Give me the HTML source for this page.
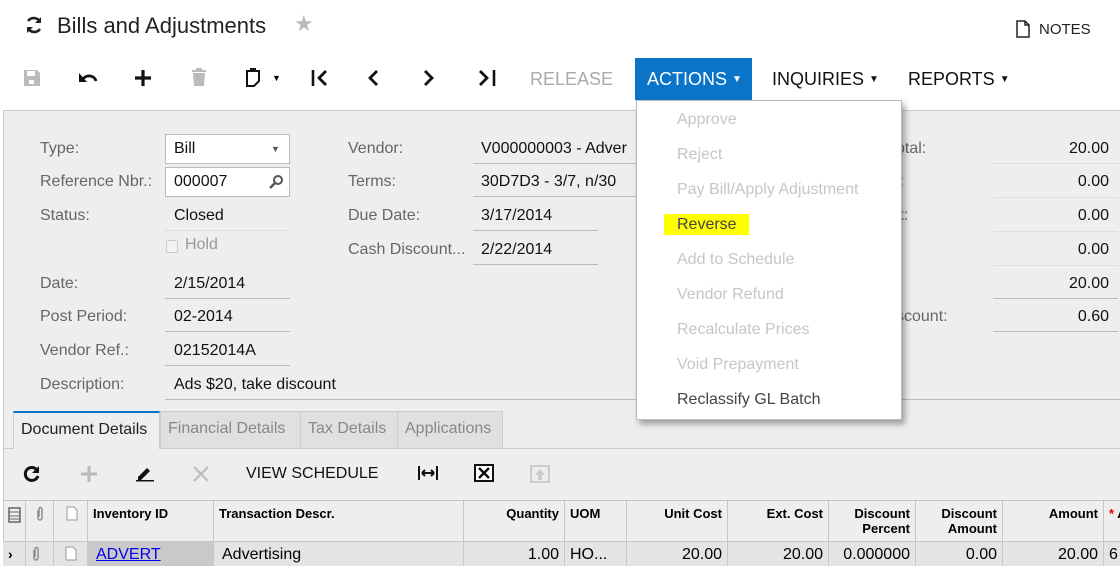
<!DOCTYPE html>
<html><head><meta charset="utf-8"><style>
*{margin:0;padding:0;box-sizing:border-box}
body{width:1120px;height:566px;overflow:hidden;background:#fff;font-family:"Liberation Sans",Arial,sans-serif;position:relative;color:#000}
.a{position:absolute;white-space:nowrap}
.lbl{font-size:16px;color:#666;margin-top:1px}
.val{font-size:16px;color:#111;margin-top:1px}
.ln{position:absolute;height:1px;background:#bbb}
.tb{font-size:18px;color:#111}
.dm{color:#aaa}
.mi{position:absolute;left:677px;font-size:16px;color:#c6c6c6;margin-top:1px}
.gh{position:absolute;top:500px;height:41px;border-right:1px solid #c6c6c6;border-top:1px solid #c6c6c6;font-size:13px;font-weight:bold;padding:5px 5px;line-height:15px}
.gr{position:absolute;top:541px;height:25px;border-right:1px solid #c6c6c6;border-top:1px solid #c6c6c6;font-size:16px;padding:4px 5px;background:#e4e4e4}
.r{text-align:right}
</style></head><body>
<svg class="a" style="left:24px;top:15px" width="20" height="20" viewBox="0 0 20 20"><path d="M16 7A7 7 0 0 0 4 6M4 13a7 7 0 0 0 12 1" fill="none" stroke="#222" stroke-width="2.6"/><path d="M17 2v6h-6z M3 18v-6h6z" fill="#222"/></svg>
<div class="a" style="left:57px;top:13px;font-size:22px;color:#222">Bills and Adjustments</div>
<div class="a" style="left:294px;top:11px;font-size:22px;color:#bbb">★</div>
<svg class="a" style="left:1016px;top:20px" width="14" height="18" viewBox="0 0 14 18"><path d="M1 1h8l4 4v12H1z M9 1v4h4" fill="none" stroke="#222" stroke-width="1.5"/></svg>
<div class="a" style="left:1039px;top:21px;font-size:15px;color:#222">NOTES</div>
<svg class="a" style="left:23px;top:69px" width="18" height="18" viewBox="0 0 18 18"><path d="M1 1h13l3 3v13H1z" fill="#bbb"/><rect x="4" y="2" width="8" height="5" fill="#fff"/><rect x="6" y="11" width="5" height="4" fill="#fff"/></svg>
<svg class="a" style="left:78px;top:70px" width="20" height="16" viewBox="0 0 20 16"><path d="M5 9a7 6 0 0 1 13 2" fill="none" stroke="#111" stroke-width="2.8"/><path d="M1 3v9h8z" fill="#111"/></svg>
<svg class="a" style="left:134px;top:69px" width="18" height="18" viewBox="0 0 18 18"><path d="M9 1v16M1 9h16" stroke="#111" stroke-width="3.2"/></svg>
<svg class="a" style="left:190px;top:67px" width="18" height="20" viewBox="0 0 18 20"><rect x="2" y="3" width="14" height="2" fill="#bbb"/><rect x="6" y="1" width="6" height="2" fill="#bbb"/><path d="M3 6h12l-1 13H4z" fill="#bbb"/></svg>
<svg class="a" style="left:245px;top:67px" width="18" height="21" viewBox="0 0 18 21"><path d="M2 4h12v10l-5 5H2z" fill="none" stroke="#111" stroke-width="2"/><rect x="5" y="1" width="6" height="4" fill="#111"/></svg>
<div class="a" style="left:272px;top:73px;font-size:9px">▼</div>
<svg class="a" style="left:311px;top:69px" width="20" height="18" viewBox="0 0 20 18"><path d="M2 1v16" stroke="#111" stroke-width="2.6"/><path d="M15 2l-7 7 7 7" fill="none" stroke="#111" stroke-width="2.8"/></svg>
<svg class="a" style="left:366px;top:69px" width="14" height="18" viewBox="0 0 14 18"><path d="M11 2l-7 7 7 7" fill="none" stroke="#111" stroke-width="2.8"/></svg>
<svg class="a" style="left:422px;top:69px" width="14" height="18" viewBox="0 0 14 18"><path d="M3 2l7 7-7 7" fill="none" stroke="#111" stroke-width="2.8"/></svg>
<svg class="a" style="left:477px;top:69px" width="20" height="18" viewBox="0 0 20 18"><path d="M3 2l7 7-7 7" fill="none" stroke="#111" stroke-width="2.8"/><path d="M17 1v16" stroke="#111" stroke-width="2.6"/></svg>
<div class="a tb dm" style="left:530px;top:69px">RELEASE</div>
<div class="a" style="left:635px;top:58px;width:117px;height:42px;background:#0a74c9"></div>
<div class="a" style="left:647px;top:69px;font-size:18px;color:#fff">ACTIONS <span style="font-size:10px;vertical-align:3px">▼</span></div>
<div class="a tb" style="left:772px;top:69px">INQUIRIES <span style="font-size:10px;vertical-align:3px">▼</span></div>
<div class="a tb" style="left:908px;top:69px">REPORTS <span style="font-size:10px;vertical-align:3px">▼</span></div>
<div class="a" style="left:3px;top:110px;width:1117px;height:456px;background:#eee;border-top:1px solid #ccc;border-left:1px solid #ccc"></div>
<div class="a lbl" style="left:40px;top:139px">Type:</div>
<div class="a lbl" style="left:40px;top:172px">Reference Nbr.:</div>
<div class="a lbl" style="left:40px;top:206px">Status:</div>
<div class="a lbl" style="left:40px;top:274px">Date:</div>
<div class="a lbl" style="left:40px;top:307px">Post Period:</div>
<div class="a lbl" style="left:40px;top:341px">Vendor Ref.:</div>
<div class="a lbl" style="left:40px;top:375px">Description:</div>
<div class="a" style="left:165px;top:134px;width:125px;height:30px;background:#fff;border:1px solid #bbb"></div>
<div class="a val" style="left:174px;top:139px">Bill</div>
<div class="a" style="left:271px;top:144px;font-size:9px;color:#555">▼</div>
<div class="a" style="left:165px;top:167px;width:125px;height:30px;background:#fff;border:1px solid #bbb"></div>
<div class="a val" style="left:174px;top:172px">000007</div>
<svg class="a" style="left:268px;top:174px" width="16" height="16" viewBox="0 0 16 16"><circle cx="10" cy="6" r="4" fill="none" stroke="#555" stroke-width="2"/><path d="M7 9l-5 5" stroke="#555" stroke-width="2.5"/></svg>
<div class="a val" style="left:174px;top:206px">Closed</div>
<div class="ln" style="left:165px;top:230px;width:125px;background:#ddd"></div>
<div class="a" style="left:166px;top:240px;width:12px;height:13px;border:1px solid #ccc;border-radius:2px;background:#f3f3f3"></div>
<div class="a" style="left:185px;top:236px;font-size:16px;color:#999">Hold</div>
<div class="a val" style="left:174px;top:274px">2/15/2014</div>
<div class="ln" style="left:165px;top:298px;width:125px"></div>
<div class="a val" style="left:174px;top:307px">02-2014</div>
<div class="ln" style="left:165px;top:331px;width:125px"></div>
<div class="a val" style="left:174px;top:341px">02152014A</div>
<div class="ln" style="left:165px;top:365px;width:125px"></div>
<div class="a val" style="left:174px;top:375px">Ads $20, take discount</div>
<div class="ln" style="left:165px;top:399px;width:955px"></div>
<div class="a lbl" style="left:348px;top:139px">Vendor:</div>
<div class="a lbl" style="left:348px;top:172px">Terms:</div>
<div class="a lbl" style="left:348px;top:206px">Due Date:</div>
<div class="a lbl" style="left:348px;top:240px">Cash Discount...</div>
<div class="a val" style="left:481px;top:139px">V000000003 - Adver</div>
<div class="ln" style="left:473px;top:163px;width:165px"></div>
<div class="a val" style="left:481px;top:172px">30D7D3 - 3/7, n/30</div>
<div class="ln" style="left:473px;top:196px;width:165px"></div>
<div class="a val" style="left:481px;top:206px">3/17/2014</div>
<div class="ln" style="left:473px;top:230px;width:125px"></div>
<div class="a val" style="left:481px;top:240px">2/22/2014</div>
<div class="ln" style="left:473px;top:264px;width:125px"></div>
<div class="a lbl" style="left:896px;top:139px">otal:</div>
<div class="a lbl" style="left:896px;top:172px">l:</div>
<div class="a lbl" style="left:896px;top:206px">x:</div>
<div class="a lbl" style="left:896px;top:240px">:</div>
<div class="a lbl" style="left:896px;top:274px">:</div>
<div class="a lbl" style="left:896px;top:307px">scount:</div>
<div class="a val r" style="left:1000px;width:109px;top:139px">20.00</div>
<div class="a val r" style="left:1000px;width:109px;top:172px">0.00</div>
<div class="a val r" style="left:1000px;width:109px;top:206px">0.00</div>
<div class="a val r" style="left:1000px;width:109px;top:240px">0.00</div>
<div class="a val r" style="left:1000px;width:109px;top:274px">20.00</div>
<div class="a val r" style="left:1000px;width:109px;top:307px">0.60</div>
<div class="ln" style="left:993px;top:163px;width:125px;background:#ddd"></div>
<div class="ln" style="left:993px;top:197px;width:125px;background:#ddd"></div>
<div class="ln" style="left:993px;top:231px;width:125px;background:#ddd"></div>
<div class="ln" style="left:993px;top:265px;width:125px;background:#ddd"></div>
<div class="ln" style="left:993px;top:298px;width:125px"></div>
<div class="ln" style="left:993px;top:331px;width:125px"></div>
<div class="a" style="left:3px;top:448px;width:1117px;height:1px;background:#ccc"></div>
<div class="a" style="left:13px;top:411px;width:147px;height:38px;background:#eee;border-top:2px solid #0a74c9;border-left:1px solid #ccc;border-right:1px solid #ccc"></div>
<div class="a" style="left:21px;top:421px;font-size:16px;color:#222">Document Details</div>
<div class="a" style="left:160px;top:411px;width:343px;height:37px;background:#e0e0e0;border:1px solid #ccc;border-bottom:none"></div>
<div class="a" style="left:300px;top:411px;width:1px;height:37px;background:#ccc"></div>
<div class="a" style="left:397px;top:411px;width:1px;height:37px;background:#ccc"></div>
<div class="a" style="left:168px;top:420px;font-size:16px;color:#888">Financial Details</div>
<div class="a" style="left:308px;top:420px;font-size:16px;color:#888">Tax Details</div>
<div class="a" style="left:405px;top:420px;font-size:16px;color:#888">Applications</div>
<svg class="a" style="left:23px;top:465px" width="18" height="18" viewBox="0 0 18 18"><path d="M14 5A6.5 6.5 0 1 0 15 11" fill="none" stroke="#111" stroke-width="3"/><path d="M16 1v7H9z" fill="#111"/></svg>
<svg class="a" style="left:80px;top:465px" width="18" height="18" viewBox="0 0 18 18"><path d="M9 1v16M1 9h16" stroke="#bbb" stroke-width="3"/></svg>
<svg class="a" style="left:135px;top:464px" width="20" height="18" viewBox="0 0 20 18"><path d="M3 13l9-9 3 3-9 9H3z" fill="#111"/><rect x="1" y="16" width="18" height="1.5" fill="#111"/></svg>
<svg class="a" style="left:192px;top:465px" width="18" height="18" viewBox="0 0 18 18"><path d="M2 2l14 14M16 2L2 16" stroke="#bbb" stroke-width="2.2"/></svg>
<div class="a" style="left:246px;top:465px;font-size:16px;color:#111">VIEW SCHEDULE</div>
<svg class="a" style="left:417px;top:464px" width="22" height="18" viewBox="0 0 22 18"><path d="M2 2v14M20 2v14M5 9h12M5 9l3-3M5 9l3 3M17 9l-3-3M17 9l-3 3" stroke="#111" stroke-width="2" fill="none"/></svg>
<svg class="a" style="left:474px;top:464px" width="20" height="18" viewBox="0 0 20 18"><rect x="1" y="1" width="18" height="16" fill="#fff" stroke="#111" stroke-width="2"/><path d="M5 4l10 10M15 4L5 14" stroke="#111" stroke-width="2.5"/></svg>
<svg class="a" style="left:529px;top:462px" width="22" height="22" viewBox="0 0 22 22"><rect x="2" y="4" width="18" height="16" fill="none" stroke="#ccc" stroke-width="2"/><path d="M11 7l-5 6h3v5h4v-5h3z" fill="#ccc"/></svg>
<div class="gh" style="left:3px;width:23px"></div>
<div class="gh" style="left:26px;width:28px"></div>
<div class="gh" style="left:54px;width:34px"></div>
<svg class="a" style="left:8px;top:507px" width="13" height="16" viewBox="0 0 13 16"><rect x="1" y="1" width="11" height="14" fill="none" stroke="#666" stroke-width="1.5"/><path d="M1 5h11M1 9h11M1 12h11" stroke="#666"/></svg>
<svg class="a" style="left:35px;top:506px" width="10" height="16" viewBox="0 0 10 16"><path d="M3 4v8a2 2 0 0 0 4 0V3a1.5 1.5 0 0 0-3 0v8" fill="none" stroke="#888" stroke-width="1.4"/></svg>
<svg class="a" style="left:66px;top:506px" width="12" height="15" viewBox="0 0 12 15"><path d="M1 1h7l3 3v10H1z" fill="#fff" stroke="#999"/></svg>
<div class="gh" style="left:88px;width:126px">Inventory ID</div>
<div class="gh" style="left:214px;width:250px">Transaction Descr.</div>
<div class="gh r" style="left:464px;width:101px">Quantity</div>
<div class="gh" style="left:565px;width:62px">UOM</div>
<div class="gh r" style="left:627px;width:101px">Unit Cost</div>
<div class="gh r" style="left:728px;width:101px">Ext. Cost</div>
<div class="gh r" style="left:829px;width:87px">Discount<br>Percent</div>
<div class="gh r" style="left:916px;width:87px">Discount<br>Amount</div>
<div class="gh r" style="left:1003px;width:101px">Amount</div>
<div class="gh" style="left:1104px;width:30px"><span style="color:#e00">*</span> A</div>
<div class="gr" style="left:3px;width:23px;font-weight:bold;font-size:14px">›</div>
<div class="gr" style="left:26px;width:28px"><svg width="10" height="16" viewBox="0 0 10 16"><path d="M3 4v8a2 2 0 0 0 4 0V3a1.5 1.5 0 0 0-3 0v8" fill="none" stroke="#888" stroke-width="1.4"/></svg></div>
<div class="gr" style="left:54px;width:34px;padding-left:11px"><svg width="12" height="15" viewBox="0 0 12 15"><path d="M1 1h7l3 3v10H1z" fill="#fff" stroke="#999"/></svg></div>
<div class="gr" style="left:88px;width:126px;background:#c9c9c9;padding-left:8px"><span style="color:#00e;text-decoration:underline">ADVERT</span></div>
<div class="gr" style="left:214px;width:250px;padding-left:8px">Advertising</div>
<div class="gr r" style="left:464px;width:101px">1.00</div>
<div class="gr" style="left:565px;width:62px">HO...</div>
<div class="gr r" style="left:627px;width:101px">20.00</div>
<div class="gr r" style="left:728px;width:101px">20.00</div>
<div class="gr r" style="left:829px;width:87px">0.000000</div>
<div class="gr r" style="left:916px;width:87px">0.00</div>
<div class="gr r" style="left:1003px;width:101px">20.00</div>
<div class="gr" style="left:1104px;width:30px">6</div>
<div class="a" style="left:636px;top:100px;width:266px;height:320px;background:#fff;border:1px solid #bbb;box-shadow:3px 4px 6px rgba(0,0,0,.35)"></div>
<div class="mi" style="top:110px">Approve</div>
<div class="mi" style="top:145px">Reject</div>
<div class="mi" style="top:180px">Pay Bill/Apply Adjustment</div>
<div class="a" style="left:664px;top:214px;width:85px;height:21px;background:#ffff00"></div>
<div class="mi" style="top:215px;color:#444">Reverse</div>
<div class="mi" style="top:250px">Add to Schedule</div>
<div class="mi" style="top:285px">Vendor Refund</div>
<div class="mi" style="top:320px">Recalculate Prices</div>
<div class="mi" style="top:355px">Void Prepayment</div>
<div class="mi" style="top:390px;color:#444">Reclassify GL Batch</div>
</body></html>
